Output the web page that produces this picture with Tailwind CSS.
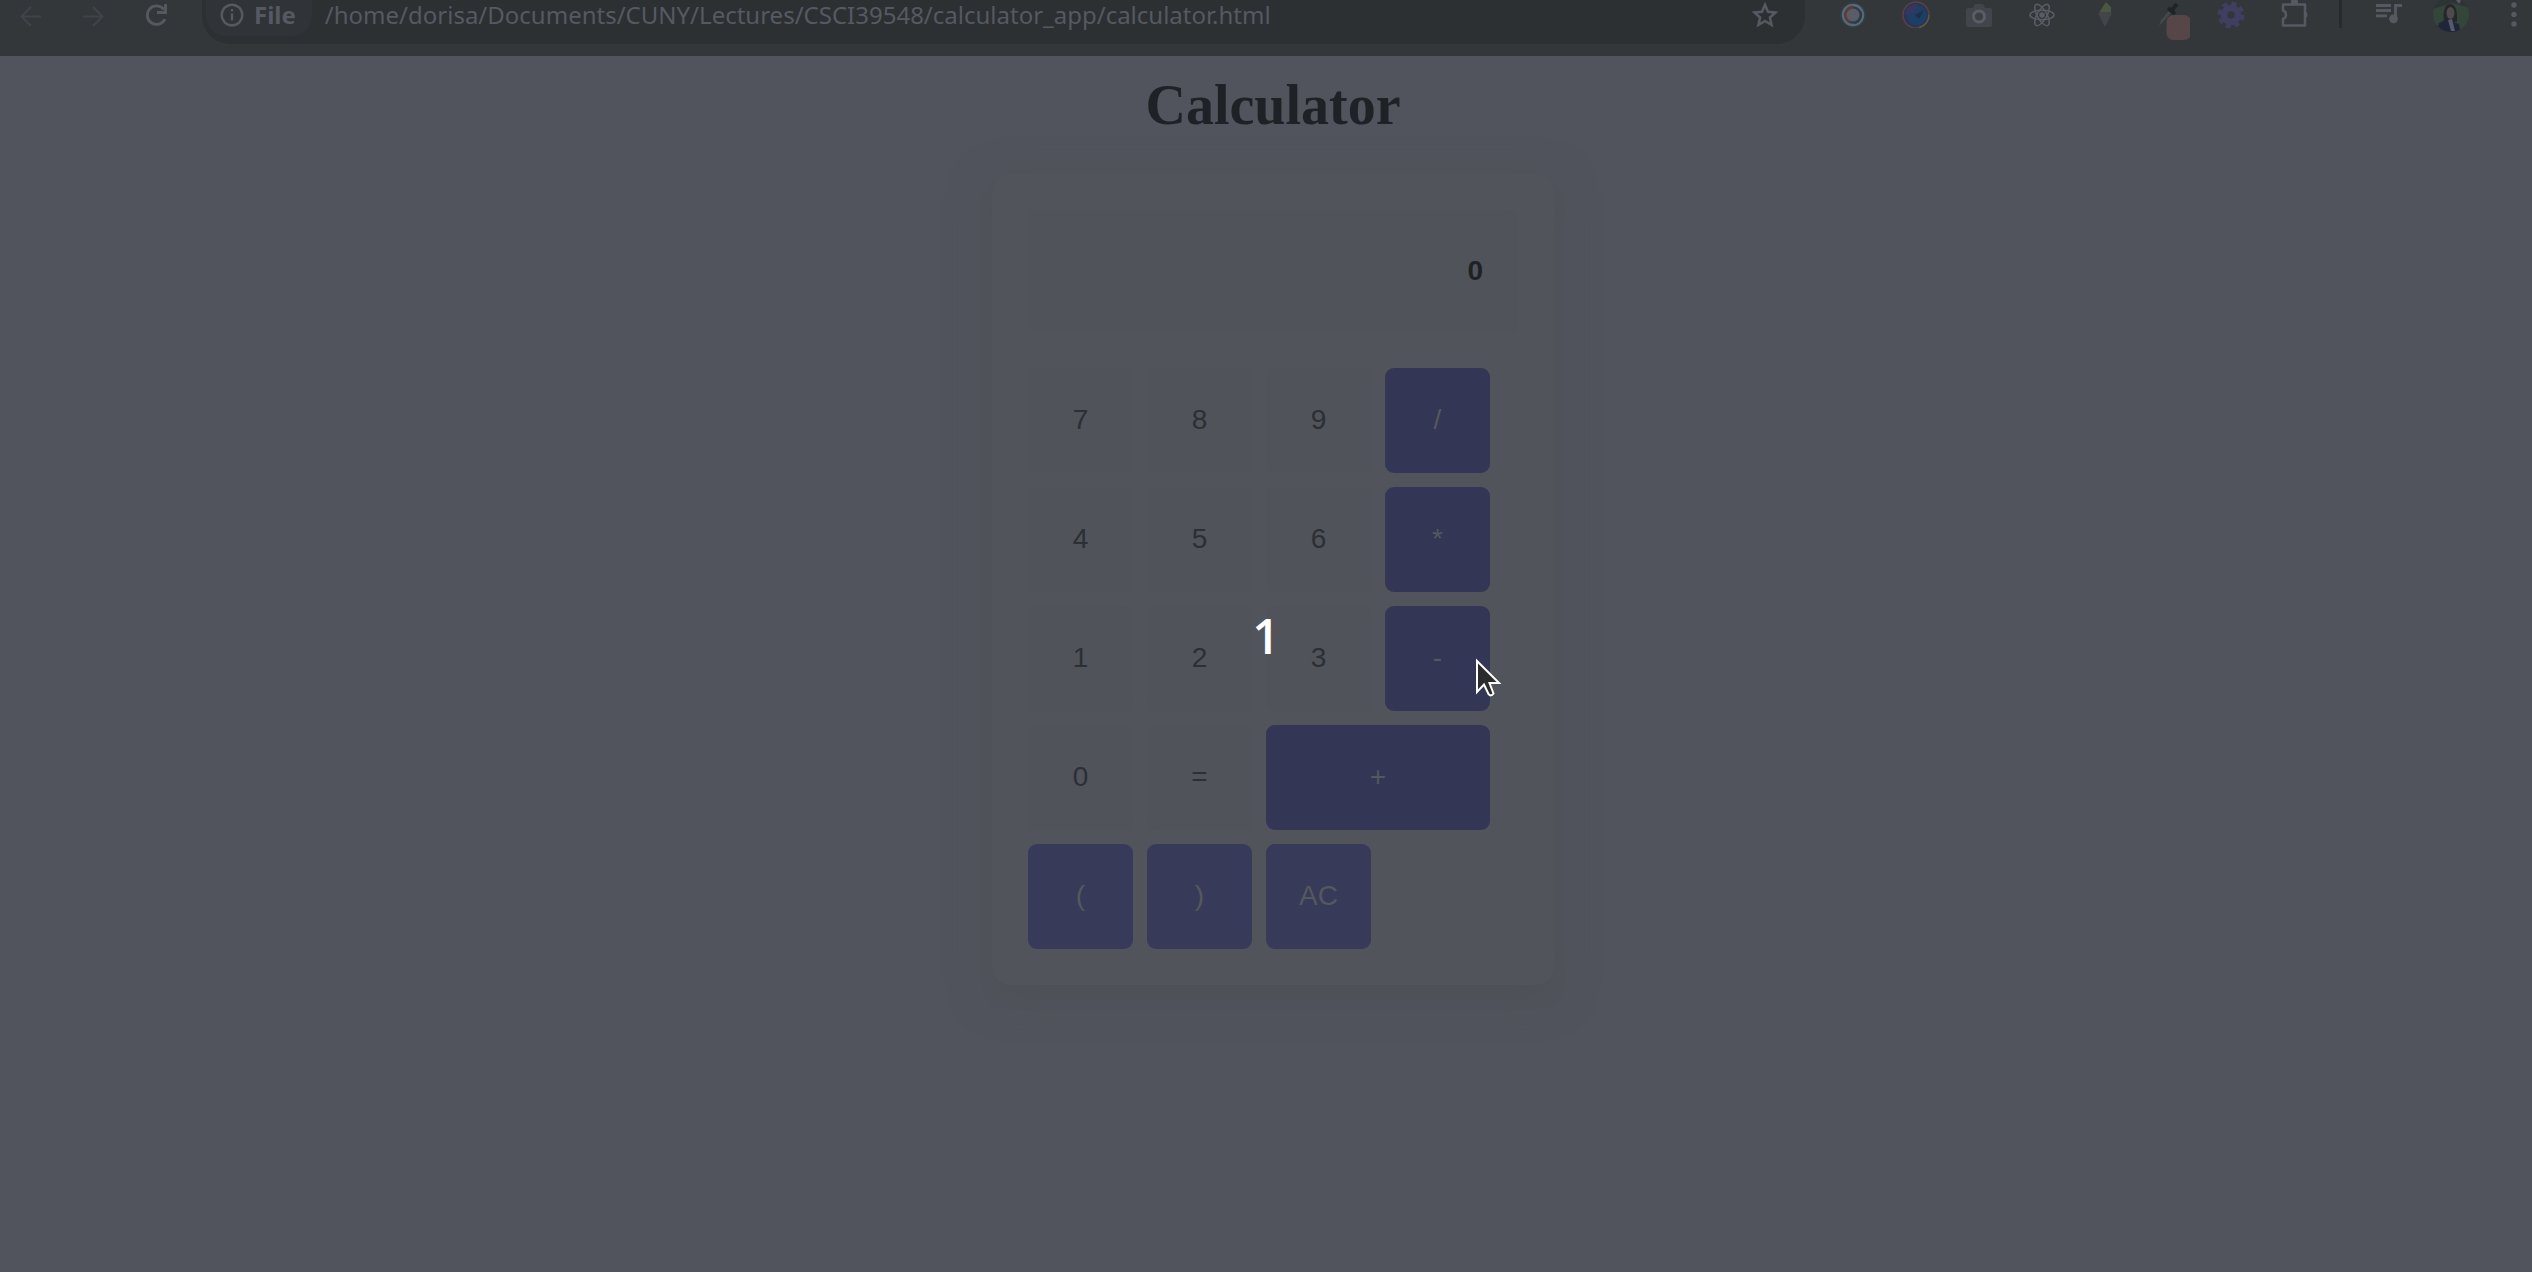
<!DOCTYPE html>
<html lang="en">
<head>
<meta charset="utf-8">
<title>Calculator</title>
<script src="https://cdn.jsdelivr.net/npm/@tailwindcss/browser@4"></script>
</head>
<body class="relative flex min-h-screen flex-col overflow-hidden bg-[#51545c]">

<header class="flex h-14 w-full items-start bg-[#34373a] text-[#565962]">
  <nav class="flex h-7 w-[202px] shrink-0 items-center gap-[38px] pl-5" aria-label="Navigation">
    <button aria-label="Back" class="size-6 text-[#40434a]"><svg class="size-6" viewBox="0 0 24 24" fill="none" stroke="currentColor" stroke-width="2.2"><path d="M21 14.500H2M11 5L1.500 14.500L11 24"/></svg></button>
    <button aria-label="Forward" class="size-6 text-[#40434a]"><svg class="size-6" viewBox="0 0 24 24" fill="none" stroke="currentColor" stroke-width="2.2"><path d="M1 14.500H20M11 5L20.500 14.500L11 24"/></svg></button>
    <button aria-label="Reload" class="size-6"><svg class="size-6" viewBox="0 0 24 24" fill="none" stroke="currentColor" stroke-width="2.8"><path d="M20 7.500A9.300 9.300 0 1 0 21 17"/><path d="M21.500 2V10.500H13"/></svg></button>
  </nav>
  <div class="flex h-11 grow items-start rounded-b-[28px] bg-[#2c3033] pl-1">
    <button class="flex h-9 items-start gap-2.5 rounded-b-[20px] bg-[#303337] pl-3.5 pr-4 font-['Noto_Sans',sans-serif] text-2xl font-bold leading-[30px]">
      <svg class="mt-[3px] size-6" viewBox="0 0 24 24" fill="none" stroke="currentColor" stroke-width="2.4"><circle cx="12" cy="12" r="10.300"/><path d="M12 10.500V17.500M12 6V8.600"/></svg>
      File
    </button>
    <input aria-label="Address" value="/home/dorisa/Documents/CUNY/Lectures/CSCI39548/calculator_app/calculator.html" class="h-[30px] grow bg-transparent pl-[13px] font-['Noto_Sans',sans-serif] text-2xl outline-none">
    <button aria-label="Bookmark this page" class="mr-[27px] mt-[2px] size-[26px]"><svg class="size-[26px]" viewBox="0 0 26 26" fill="none" stroke="currentColor" stroke-width="2.5"><path d="M13 2.800L16 9.800L23.600 10.500L17.900 15.500L19.600 23L13 19L6.400 23L8.100 15.500L2.400 10.500L10 9.800Z"/></svg></button>
  </div>
  <div class="flex h-7 w-[727px] shrink-0 items-start pl-[34px]">
    <div class="flex gap-[35px]">
      <button aria-label="Recorder" class="size-7"><svg class="size-7" viewBox="0 0 28 28" fill="none"><circle cx="14" cy="15" r="13" fill="#293f4e"/><circle cx="14" cy="15" r="10" stroke="#62656b" stroke-width="2.5"/><path d="M14 7A8 8 0 0 0 11 22" stroke="#563f3b" stroke-width="3"/><path d="M15 23A8 8 0 0 0 21 11" stroke="#2b3b4c" stroke-width="2"/><circle cx="14" cy="15" r="6.500" fill="#5a5d65"/></svg></button>
      <button aria-label="Browser tool" class="size-7"><svg class="size-7" viewBox="0 0 28 28" fill="none"><circle cx="14" cy="15" r="13" fill="#2b3452" stroke="#5a4145" stroke-width="1.5"/><path d="M27 15A13 13 0 0 1 17 27.500" stroke="#5b593f" stroke-width="1.5"/><circle cx="15" cy="15.500" r="10" fill="#1d3f66"/><path d="M3 15A11 11 0 0 1 16 4L12 13Z" fill="#363761"/><path d="M13 15L22 10L17 19Z" fill="#1b2f4f"/></svg></button>
      <button aria-label="Camera" class="size-7"><svg class="size-7" viewBox="0 0 28 28"><path d="M3 8H8L10 4H18L20 8H25A2 2 0 0 1 27 10V25A2 2 0 0 1 25 27H3A2 2 0 0 1 1 25V10A2 2 0 0 1 3 8Z" fill="#42454b"/><circle cx="14" cy="16.500" r="5.500" fill="#3c3f44" stroke="#5a5d65" stroke-width="3"/></svg></button>
      <button aria-label="React tools" class="size-7"><svg class="size-7" viewBox="0 0 28 28" fill="none" stroke="#5a5d66" stroke-width="1.5"><ellipse cx="14" cy="15" rx="12" ry="4.700"/><ellipse cx="14" cy="15" rx="12" ry="4.700" transform="rotate(60 14 15)"/><ellipse cx="14" cy="15" rx="12" ry="4.700" transform="rotate(120 14 15)"/><circle cx="14" cy="15" r="2" fill="#5a5d66"/></svg></button>
      <button aria-label="Cone" class="size-7"><svg class="size-7" viewBox="0 0 28 28"><path d="M7 13L14 9L21 13L14 27Z" fill="#42464b"/><path d="M9 11L15 2L20 7L20 12H9Z" fill="#4a5742"/></svg></button>
      <button aria-label="Colour picker" class="h-11 w-7"><svg class="h-11 w-9" viewBox="0 0 36 44" fill="none"><path d="M5 26L7 20L15 11L17 13L9 22Z" fill="#404b49"/><path d="M14 8L21 14M17 11L23 4" stroke="#1f2428" stroke-width="4"/><rect x="12.500" y="15" width="24.500" height="25" rx="7" fill="#574648"/></svg></button>
      <button aria-label="Settings" class="size-7"><svg class="size-7" viewBox="0 0 28 28"><g fill="none" stroke="#403f62"><circle cx="14" cy="15" r="7" stroke-width="6.5"/><circle cx="14" cy="15" r="11.500" stroke-width="4" stroke-dasharray="5 4.032"/></g></svg></button>
      <button aria-label="Extensions" class="size-7"><svg class="size-7" viewBox="0 0 28 28"><path d="M3 4.500H25V11.500V25.500H3V19A4.500 4.500 0 0 0 3 10.500Z" fill="none" stroke="currentColor" stroke-width="2.5" stroke-linejoin="round"/><path d="M11 4V2A3.500 3.500 0 0 1 18 2V4ZM25 11A4 4 0 0 1 25 18.500Z" fill="currentColor"/></svg></button>
    </div>
    <span class="ml-[31px] h-7 w-[3px] bg-[#272b2e]"></span>
    <button aria-label="Media controls" class="ml-[33px] size-7"><svg class="size-7" viewBox="0 0 28 28" fill="none" stroke="currentColor" stroke-width="2.8"><path d="M1 5.500H16M1 10.500H16M1 15.800H12M20.500 19V5.500H27"/><circle cx="18.500" cy="18.800" r="3" fill="currentColor"/></svg></button>
    <button aria-label="Profile" class="ml-[30px] size-9"><svg class="size-9" viewBox="0 0 36 36"><defs><clipPath id="round"><circle cx="18" cy="14" r="18"/></clipPath></defs><g clip-path="url(#round)"><path d="M0 0H36V36H0Z" fill="#34463a"/><path d="M0 0H36V8L27 5L18 3L10 6L0 9Z" fill="#303336"/><path d="M23 0L28 0L26 4Z" fill="#565960"/><path d="M11 22Q9 5 17 4Q25 4 24 22Z" fill="#25272a"/><ellipse cx="17.500" cy="13" rx="4" ry="6" fill="#504a4c"/><path d="M3 33L6 23L14 19L20 22L26 24L28 34Z" fill="#20263a"/><path d="M15 20L19 19L22 31H18Z" fill="#535b6d"/></g></svg></button>
    <button aria-label="Menu" class="ml-[31px] size-7"><svg class="size-7" viewBox="0 0 28 28" fill="currentColor"><circle cx="14" cy="5" r="2.700"/><circle cx="14" cy="14.500" r="2.700"/><circle cx="14" cy="24" r="2.700"/></svg></button>
  </div>
</header>

<main class="flex grow flex-col items-center pb-14 pl-3.5 pt-[17px]">
  <h1 class="font-['Liberation_Serif',serif] text-[56px] font-bold leading-[64px] text-[#1e2226]">Calculator</h1>
  <form class="mt-[37px] flex w-[562px] flex-col gap-[35px] rounded-[18px] bg-[#51545b] p-9 font-['Liberation_Sans',sans-serif] text-[28px] text-[#2c2f33] shadow-[0_10px_40px_rgba(79,82,88,0.5),0_14px_16px_-8px_rgba(77,79,82,0.6)]">
    <input aria-label="Result" readonly value="0" class="h-[123px] w-full rounded-[9px] bg-[#50535a] px-[35px] pb-0.5 text-right font-bold text-[#1e2226] outline-none">
    <div class="grid auto-rows-[105px] grid-cols-[repeat(4,105px)] gap-3.5">
      <button type="button" class="rounded-[9px] bg-[#50535a] pb-0.5">7</button>
      <button type="button" class="rounded-[9px] bg-[#50535a] pb-0.5">8</button>
      <button type="button" class="rounded-[9px] bg-[#50535a] pb-0.5">9</button>
      <button type="button" class="rounded-[9px] bg-[#333655] pb-0.5 text-[#55585d]">/</button>
      <button type="button" class="rounded-[9px] bg-[#50535a] pb-0.5">4</button>
      <button type="button" class="rounded-[9px] bg-[#50535a] pb-0.5">5</button>
      <button type="button" class="rounded-[9px] bg-[#50535a] pb-0.5">6</button>
      <button type="button" class="rounded-[9px] bg-[#333655] pb-0.5 text-[#55585d]">*</button>
      <button type="button" class="rounded-[9px] bg-[#50535a] pb-0.5">1</button>
      <button type="button" class="rounded-[9px] bg-[#50535a] pb-0.5">2</button>
      <button type="button" class="rounded-[9px] bg-[#50535a] pb-0.5">3</button>
      <button type="button" class="relative rounded-[9px] bg-[#333655] pb-0.5 text-[#55585d]">-
        <svg class="absolute left-[89px] top-[51px] h-11 w-8" viewBox="0 0 32 44"><path d="M3 4V35L10 27.500L14.500 37Q17 40 19.500 36.500L15.500 26H25Z" fill="#2b2b2b" stroke="#fff" stroke-width="2"/></svg>
      </button>
      <button type="button" class="rounded-[9px] bg-[#50535a] pb-0.5">0</button>
      <button type="button" class="rounded-[9px] bg-[#50535a] pb-0.5">=</button>
      <button type="button" class="col-span-2 rounded-[9px] bg-[#333655] pb-0.5 text-[#55585d]">+</button>
      <button type="button" class="rounded-[9px] bg-[#383a5a] pb-0.5 text-[#55585d]">(</button>
      <button type="button" class="rounded-[9px] bg-[#383a5a] pb-0.5 text-[#55585d]">)</button>
      <button type="button" class="rounded-[9px] bg-[#383a5a] pb-0.5 text-[#55585d]">AC</button>
    </div>
  </form>
</main>

<div class="pointer-events-none absolute inset-0 flex items-center justify-center font-['Open_Sans',sans-serif] text-5xl font-semibold text-white">1</div>
</body>
</html>
